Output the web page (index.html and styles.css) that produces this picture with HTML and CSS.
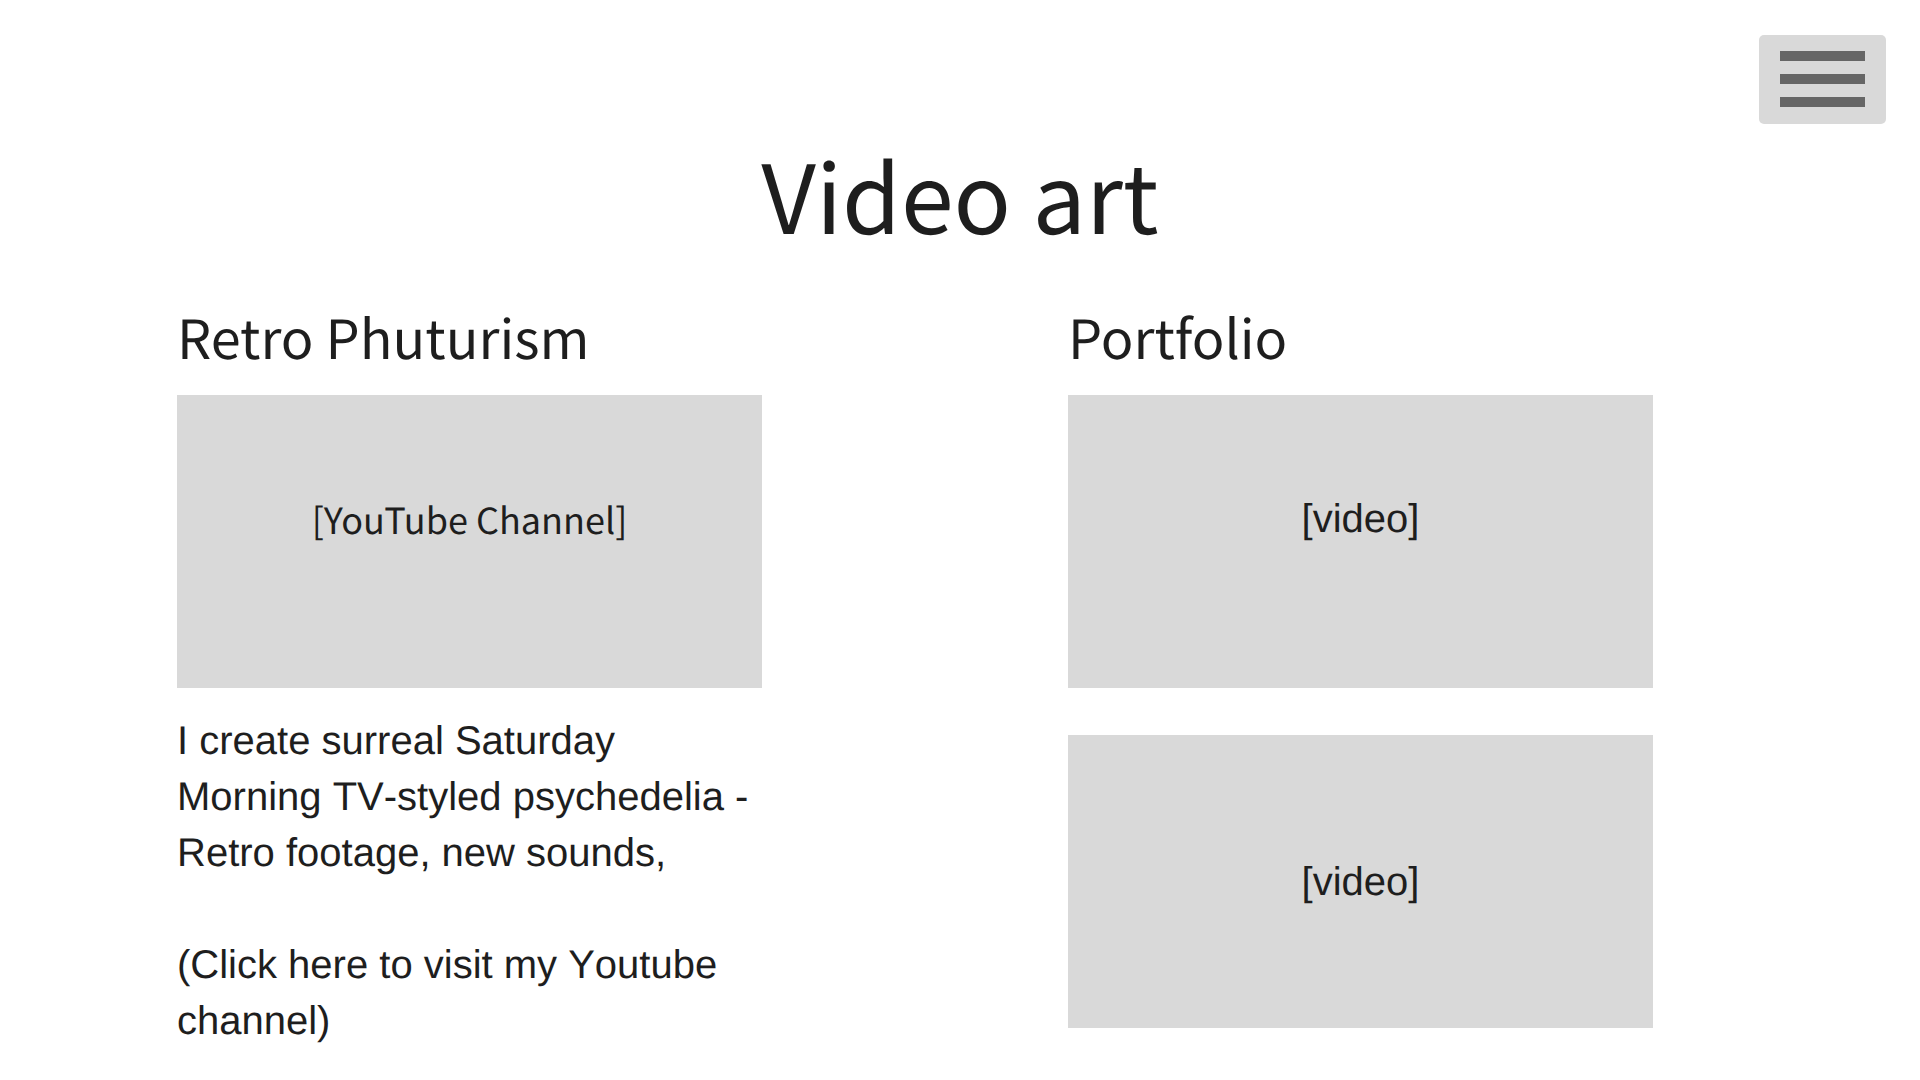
FILE: index.html
```html
<!DOCTYPE html>
<html lang="en">
<head>
<meta charset="utf-8">
<meta name="viewport" content="width=device-width, initial-scale=1">
<title>Video art</title>
<link rel="stylesheet" href="styles.css">
</head>
<body>
<header class="topbar">
  <button class="menu" type="button" aria-label="Menu">
    <span class="menu-line"></span>
    <span class="menu-line"></span>
    <span class="menu-line"></span>
  </button>
</header>
<main class="page">
  <h1 class="title">Video art</h1>
  <div class="columns">
    <section class="column">
      <h2 class="heading">Retro Phuturism</h2>
      <div class="frame frame-raised frame-channel">[YouTube Channel]</div>
      <div class="about">
        <p class="text">I create surreal Saturday Morning TV-styled psychedelia - Retro footage, new sounds,</p>
        <p class="text"><a class="link" href="#">(Click here to visit my Youtube channel)</a></p>
      </div>
    </section>
    <section class="column">
      <h2 class="heading">Portfolio</h2>
      <div class="videos">
        <div class="frame frame-raised">[video]</div>
        <div class="frame">[video]</div>
      </div>
    </section>
  </div>
</main>
</body>
</html>
```
FILE: styles.css
```css
* {
  box-sizing: border-box;
}

body {
  margin: 0;
  background: #fff;
  color: #1e1e1e;
  font-family: "Liberation Sans", Arial, sans-serif;
  font-size: 40px;
  font-kerning: none;
  line-height: 56px;
  text-rendering: geometricPrecision;
}

.topbar {
  display: flex;
  justify-content: flex-end;
  padding: 35px 34px 0;
}

.menu {
  display: flex;
  flex-direction: column;
  gap: 13px;
  width: 127px;
  height: 89px;
  padding: 16px 21px;
  border: 0;
  border-radius: 5px;
  background: #d9d9d9;
}

.menu-line {
  height: 10px;
  background: #666;
}

.title,
.heading,
.frame-channel {
  font-family: "Noto Sans CJK SC", "Noto Sans", sans-serif;
  font-weight: 400;
  font-kerning: normal;
}

.title {
  margin: 0;
  padding-top: 10px;
  font-size: 95px;
  line-height: 120px;
  text-align: center;
}

.columns {
  display: grid;
  grid-template-columns: 1fr 1fr;
  column-gap: 306px;
  padding: 46px 267px 40px 177px;
}

.heading {
  margin: 0 0 23px;
  font-size: 54px;
  line-height: 72px;
}

.frame {
  display: flex;
  align-items: center;
  justify-content: center;
  height: 293px;
  background: #d9d9d9;
}

.frame-raised {
  padding-bottom: 46px;
}

.frame-channel {
  font-size: 36px;
}

.videos {
  display: grid;
  row-gap: 47px;
}

.about {
  display: grid;
  row-gap: 56px;
  padding-top: 25px;
}

.text {
  margin: 0;
}

.link {
  color: inherit;
  text-decoration: none;
}

@media (max-width: 1400px) {
  .columns {
    column-gap: 60px;
    padding-right: 60px;
    padding-left: 60px;
  }
}

@media (max-width: 900px) {
  .columns {
    grid-template-columns: 1fr;
    row-gap: 47px;
  }
}
```
